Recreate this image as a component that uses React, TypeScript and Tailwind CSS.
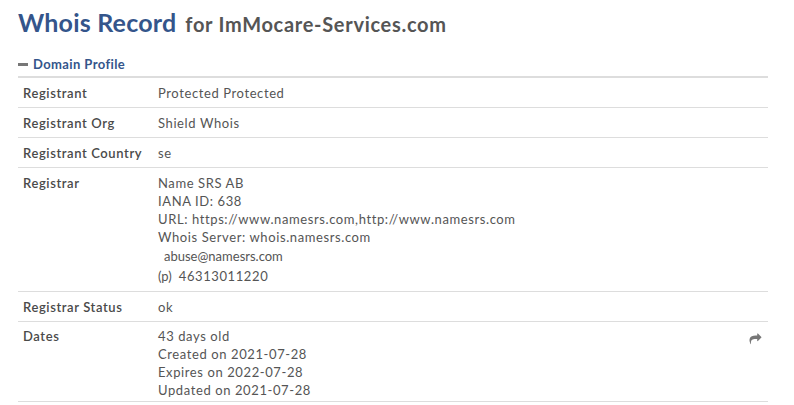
import React from 'react';

const font = { fontFamily: 'Lato, "Open Sans", sans-serif' };

const Row: React.FC<{ label: string; children: React.ReactNode; action?: React.ReactNode; pad?: string }> = ({
  label,
  children,
  action,
  pad = 'pt-[6px] pb-[5px]',
}) => (
  <div className="flex border-b border-[#dddddd] text-[13px] leading-[18px]">
    <div className={`w-[135px] shrink-0 px-[5px] ${pad} font-semibold tracking-[0.6px] text-[#4a4a4a]`}>
      {label}
    </div>
    <div className={`flex-1 ${pad} pl-[5px] tracking-[0.6px] text-[#555555]`}>{children}</div>
    {action && <div className="pt-[6px] pr-[6px]">{action}</div>}
  </div>
);

const ShareIcon = () => (
  <svg viewBox="0 0 1792 1792" className="mt-[5px] h-[12px] w-[13px]" fill="#777777">
    <path d="M1792 640q0 26-19 45l-512 512q-19 19-45 19t-45-19-19-45v-256h-224q-98 0-175.5 6t-154 21.5-133 42.5-105.5 69.5-80 101-48.5 138.5-17.5 181q0 55 5 123 0 6 2.5 23.5t2.5 26.5q0 15-8.5 25t-23.5 10q-16 0-28-17-7-9-13-22t-13.5-30-10.5-24q-127-285-127-451 0-199 53-333 162-403 875-403h224v-256q0-26 19-45t45-19 45 19l512 512q19 19 19 45z" />
  </svg>
);

export default function App() {
  return (
    <div className="min-h-[405px] bg-white pl-[18px] pt-[6px]" style={font}>
      <h1 className="flex items-baseline gap-[9px] leading-[32px]">
        <span className="text-[25px] font-bold tracking-[0.2px] text-[#34558b]">Whois Record</span>
        <span className="text-[20px] font-bold tracking-[0.7px] text-[#555555]">for ImMocare-Services.com</span>
      </h1>

      <div className="mt-[15px] flex items-center gap-[5px] text-[13px] font-bold leading-[18px] tracking-[0.4px] text-[#34558b]">
        <span className="h-[3px] w-[10px] bg-[#777777]" />
        Domain Profile
      </div>

      <div className="mt-[3px] w-[750px] border-t-2 border-[#dddddd]">
        <Row label="Registrant">Protected Protected</Row>
        <Row label="Registrant Org">Shield Whois</Row>
        <Row label="Registrant Country">se</Row>
        <Row label="Registrar">
          <div>Name SRS AB</div>
          <div>IANA ID: 638</div>
          <div>URL: https://www.namesrs.com,http://www.namesrs.com</div>
          <div>Whois Server: whois.namesrs.com</div>
          <div className="pl-[6px] tracking-normal leading-[20px]">abuse@namesrs.com</div>
          <div className="flex gap-[7px] leading-[20px]">
            <span className="tracking-normal">(p)</span>
            <span>46313011220</span>
          </div>
        </Row>
        <Row label="Registrar Status">ok</Row>
        <Row label="Dates" pad="pt-[5px] pb-[2px]" action={<ShareIcon />}>
          <div>43 days old</div>
          <div>Created on 2021-07-28</div>
          <div>Expires on 2022-07-28</div>
          <div>Updated on 2021-07-28</div>
        </Row>
      </div>
    </div>
  );
}
